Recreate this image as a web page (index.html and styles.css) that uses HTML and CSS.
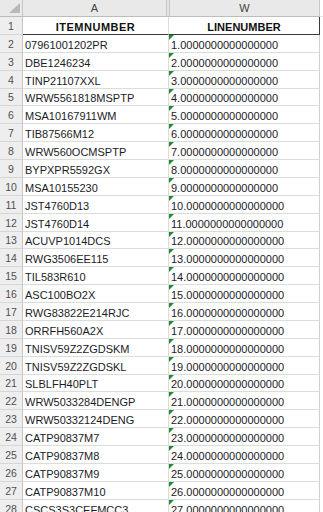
FILE: index.html
```html
<!DOCTYPE html>
<html>
<head>
<meta charset="utf-8">
<link rel="stylesheet" href="styles.css">
</head>
<body>
<div class="sheet">
  <div class="corner"><svg class="corner-tri" width="13" height="11" viewBox="0 0 13 11"><polygon points="12,0 12,10 1,10" fill="#b9b9b9"/></svg></div>
  <div class="colhead a">A</div>
  <div class="colhead gap"></div>
  <div class="colhead w">W</div>
  <div class="edge head"></div>

  <div class="rn">1</div><div class="cell a title wide">ITEMNUMBER</div><div class="cell w title">LINENUMBER</div><div class="edge"></div>
  <div class="rn">2</div><div class="cell a">07961001202PR</div><div class="cell w num">1.0000000000000000</div><div class="edge"></div>
  <div class="rn">3</div><div class="cell a">DBE1246234</div><div class="cell w num">2.0000000000000000</div><div class="edge"></div>
  <div class="rn">4</div><div class="cell a">TINP21107XXL</div><div class="cell w num">3.0000000000000000</div><div class="edge"></div>
  <div class="rn">5</div><div class="cell a">WRW5561818MSPTP</div><div class="cell w num">4.0000000000000000</div><div class="edge"></div>
  <div class="rn">6</div><div class="cell a">MSA10167911WM</div><div class="cell w num">5.0000000000000000</div><div class="edge"></div>
  <div class="rn">7</div><div class="cell a">TIB87566M12</div><div class="cell w num">6.0000000000000000</div><div class="edge"></div>
  <div class="rn">8</div><div class="cell a">WRW560OCMSPTP</div><div class="cell w num">7.0000000000000000</div><div class="edge"></div>
  <div class="rn">9</div><div class="cell a">BYPXPR5592GX</div><div class="cell w num">8.0000000000000000</div><div class="edge"></div>
  <div class="rn">10</div><div class="cell a">MSA10155230</div><div class="cell w num">9.0000000000000000</div><div class="edge"></div>
  <div class="rn">11</div><div class="cell a">JST4760D13</div><div class="cell w num">10.0000000000000000</div><div class="edge"></div>
  <div class="rn">12</div><div class="cell a">JST4760D14</div><div class="cell w num">11.0000000000000000</div><div class="edge"></div>
  <div class="rn">13</div><div class="cell a">ACUVP1014DCS</div><div class="cell w num">12.0000000000000000</div><div class="edge"></div>
  <div class="rn">14</div><div class="cell a">RWG3506EE115</div><div class="cell w num">13.0000000000000000</div><div class="edge"></div>
  <div class="rn">15</div><div class="cell a">TIL583R610</div><div class="cell w num">14.0000000000000000</div><div class="edge"></div>
  <div class="rn">16</div><div class="cell a">ASC100BO2X</div><div class="cell w num">15.0000000000000000</div><div class="edge"></div>
  <div class="rn">17</div><div class="cell a">RWG83822E214RJC</div><div class="cell w num">16.0000000000000000</div><div class="edge"></div>
  <div class="rn">18</div><div class="cell a">ORRFH560A2X</div><div class="cell w num">17.0000000000000000</div><div class="edge"></div>
  <div class="rn">19</div><div class="cell a">TNISV59Z2ZGDSKM</div><div class="cell w num">18.0000000000000000</div><div class="edge"></div>
  <div class="rn">20</div><div class="cell a">TNISV59Z2ZGDSKL</div><div class="cell w num">19.0000000000000000</div><div class="edge"></div>
  <div class="rn">21</div><div class="cell a">SLBLFH40PLT</div><div class="cell w num">20.0000000000000000</div><div class="edge"></div>
  <div class="rn">22</div><div class="cell a">WRW5033284DENGP</div><div class="cell w num">21.0000000000000000</div><div class="edge"></div>
  <div class="rn">23</div><div class="cell a">WRW50332124DENG</div><div class="cell w num">22.0000000000000000</div><div class="edge"></div>
  <div class="rn">24</div><div class="cell a">CATP90837M7</div><div class="cell w num">23.0000000000000000</div><div class="edge"></div>
  <div class="rn">25</div><div class="cell a">CATP90837M8</div><div class="cell w num">24.0000000000000000</div><div class="edge"></div>
  <div class="rn">26</div><div class="cell a">CATP90837M9</div><div class="cell w num">25.0000000000000000</div><div class="edge"></div>
  <div class="rn">27</div><div class="cell a">CATP90837M10</div><div class="cell w num">26.0000000000000000</div><div class="edge"></div>
  <div class="rn">28</div><div class="cell a">CSCS3S3CEFMCC3</div><div class="cell w num">27.0000000000000000</div><div class="edge"></div>
</div>
</body>
</html>
```

FILE: styles.css
```css
html, body {
  margin: 0;
  padding: 0;
  background: #ffffff;
  overflow: hidden;
  height: 512px;
}

.sheet {
  display: grid;
  grid-template-columns: 23px 144px 2px 151px 3px;
  grid-template-rows: 17px;
  grid-auto-rows: 17.88px;
  font-family: "Liberation Sans", Arial, sans-serif;
  font-size: 11px;
  color: #1b1b26;
}

.sheet > div {
  box-sizing: border-box;
  overflow: hidden;
  white-space: nowrap;
}

.corner {
  background: #e9e9e9;
  border-right: 1px solid #c4c4c4;
  border-bottom: 1px solid #bdbdbd;
  display: flex;
  justify-content: flex-end;
  align-items: flex-end;
  padding: 0 1px 2px 0;
}

.corner-tri {
  display: block;
}

.colhead {
  background: #e9e9e9;
  border-bottom: 1px solid #bdbdbd;
  color: #444444;
  font-size: 11px;
  display: flex;
  align-items: center;
  justify-content: center;
}

.colhead.a {
  border-right: 1px solid #c8c8c8;
}

.colhead.gap {
  background: #e3e3e3;
}

.colhead.w {
  border-left: 1px solid #c8c8c8;
  border-right: 1px solid #c8c8c8;
}

.edge {
  background: #ffffff;
}

.edge.head {
  border-bottom: 1px solid #e4e4e4;
}

.rn {
  background: #eeeeee;
  border-right: 1px solid #c4c4c4;
  border-bottom: 1px solid #d6d6d6;
  color: #505050;
  font-size: 10.5px;
  display: flex;
  align-items: center;
  justify-content: center;
  padding-top: 1px;
}

.cell {
  border-bottom: 1px solid #dcdcdc;
  border-right: 1px solid #dcdcdc;
  display: flex;
  align-items: flex-end;
  line-height: 13px;
  padding-left: 2px;
  padding-bottom: 0;
}

.cell.a {
  grid-column: 2 / 4;
}

.cell.w {
  position: relative;
  border-right-color: #d0d0d0;
}

.cell.title {
  font-weight: bold;
  color: #111111;
  justify-content: center;
  padding-left: 0;
  border-bottom: 1px solid #3a3a3a;
}

.cell.title.wide {
  letter-spacing: 0.5px;
}

.cell.w.title {
  border-right: 1px solid #3a3a3a;
}

.cell.num::before {
  content: "";
  position: absolute;
  top: 0;
  left: 0;
  border-top: 5px solid #1f8a3a;
  border-right: 5px solid transparent;
}
```
